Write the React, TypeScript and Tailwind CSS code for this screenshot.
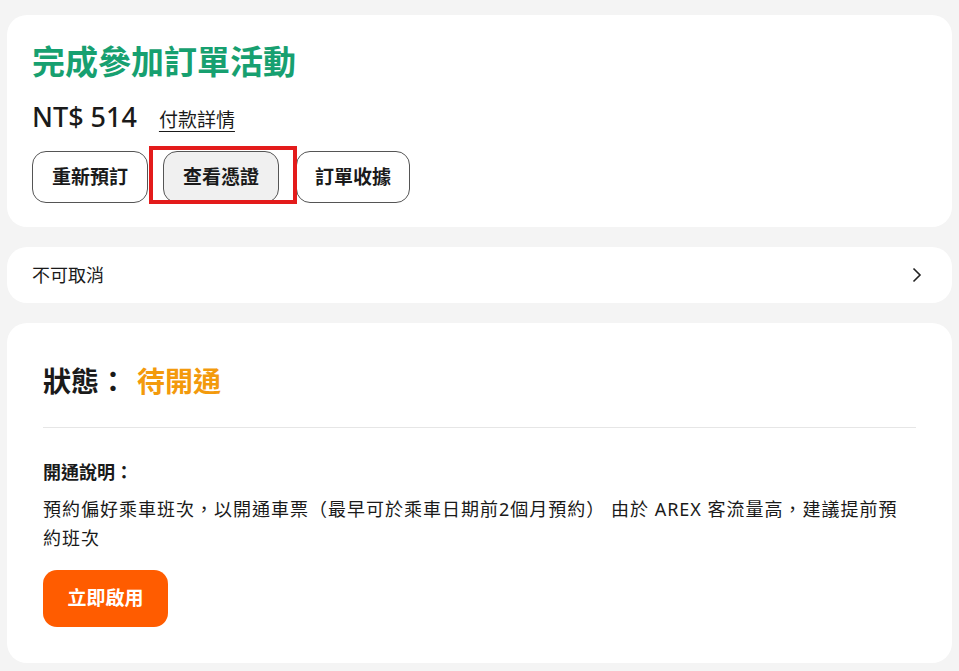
import React from 'react';

const font = { fontFamily: '"Noto Sans", "Noto Sans CJK TC", sans-serif' };

export default function App() {
    return (
        <div className="min-h-[671px] bg-[#f4f4f4] px-[7px] pt-[15px] pb-2 flex flex-col gap-5 text-[#1a1a1a]" style={font}>
            {/* Order summary */}
            <section className="bg-white rounded-[20px] px-[25px] pt-[24px] pb-[24px]">
                <h1 className="text-[33px] leading-[46px] font-bold text-[#17a070]">完成參加訂單活動</h1>
                <div className="mt-[14px] flex items-baseline gap-[22px]">
                    <span className="text-[27px] leading-[36px] font-medium">NT$ 514</span>
                    <a href="#" className="text-[19px] underline underline-offset-4">付款詳情</a>
                </div>
                <div className="mt-[16px] flex items-center">
                    <button className="h-[52px] w-[116px] rounded-[14px] border border-[#555] bg-white text-[19px] font-bold">重新預訂</button>
                    <div className="relative ml-[15px]">
                        <button className="h-[52px] w-[116px] rounded-[14px] border border-[#555] bg-[#f0f0f0] text-[19px] font-bold">查看憑證</button>
                        <div className="absolute -left-[14px] -top-[5px] w-[148px] h-[58px] border-4 border-[#e31b1b] pointer-events-none" />
                    </div>
                    <button className="ml-[17px] h-[52px] w-[114px] rounded-[14px] border border-[#555] bg-white text-[19px] font-bold">訂單收據</button>
                </div>
            </section>

            {/* Cancellation */}
            <section className="bg-white rounded-[20px] h-[56px] pl-[25px] pr-[30px] flex items-center justify-between">
                <span className="text-[18px]">不可取消</span>
                <svg width="10" height="16" viewBox="0 0 10 16" fill="none" stroke="#222" strokeWidth="1.6">
                    <path d="M1.5 1.5 L8 8 L1.5 14.5" />
                </svg>
            </section>

            {/* Status */}
            <section className="bg-white rounded-[20px] px-[36px] pt-[40px] pb-[36px]">
                <div className="flex items-center text-[28px] leading-[36px] font-bold">
                    <span>狀態：</span>
                    <span className="ml-[10px] text-[#f39a0c]">待開通</span>
                </div>
                <div className="mt-[28px] border-t border-[#e6e6e6]" />
                <h2 className="mt-[30px] text-[18px] leading-[28px] font-bold">開通說明：</h2>
                <p className="mt-[9px] text-[18px] leading-[29px] tracking-[1px]">
                    預約偏好乘車班次，以開通車票（最早可於乘車日期前2個月預約） 由於 AREX 客流量高，建議提前預約班次
                </p>
                <button className="mt-[17px] h-[57px] w-[125px] rounded-[14px] bg-[#ff5c00] text-white text-[19px] font-bold">立即啟用</button>
            </section>
        </div>
    );
}
